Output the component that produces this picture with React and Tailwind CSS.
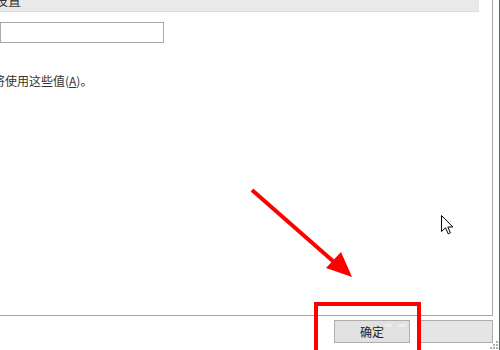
import React from 'react';

const font = { fontFamily: '"Noto Sans CJK SC", "Noto Sans", sans-serif' };

const gripDots = [0, 0, 1, 0, 1, 1, 1, 1, 1];

const App = () => {
    return (
        <div className="relative w-[500px] h-[350px] overflow-hidden bg-white flex" style={font}>
            {/* Dialog area */}
            <div className="w-[499px] flex flex-col">
                {/* Settings panel */}
                <div className="w-[493px] h-[316px] border-r border-b border-[#a6a6a6] flex flex-col">
                    <div className="h-[12px] w-[479px] bg-[#e9e9e9] border-b border-[#dcdcdc] overflow-hidden">
                        <div className="-mt-[9px] -ml-[5px] text-[13px] leading-[17px] text-[#333]">设置</div>
                    </div>
                    <div className="mt-[10px] w-[164px] h-[21px] border border-[#a9a9a9] bg-white" />
                    <div className="mt-[30px] -ml-[7px] text-[12px] leading-[16px] text-[#333]">
                        将使用这些值(<span className="underline">A</span>)。
                    </div>
                </div>

                {/* Footer buttons */}
                <div className="flex justify-end gap-[7px] pt-[4px] pr-[6px]">
                    <div className="relative w-[76px] h-[23px] bg-[#e1e1e1] border border-[#adadad] flex items-center justify-center text-[12px] text-[#222]">
                        确定
                        <div className="absolute left-[50px] top-[3px] w-[7px] h-[3px] bg-[#ececec]" />
                        <div className="absolute left-[63px] top-[3px] w-[8px] h-[3px] bg-[#ececec]" />
                    </div>
                    <div className="w-[76px] h-[23px] bg-[#e5e5e5] border border-[#adadad]" />
                </div>
            </div>

            {/* Window edge */}
            <div className="w-[1px] h-full bg-[#5f6368]" />

            {/* Resize grip */}
            <div className="absolute right-[2px] bottom-[1px] grid grid-cols-3 gap-[1px]">
                {gripDots.map((on, i) => (
                    <div key={i} className={on ? 'w-[2px] h-[2px] bg-[#b0b0b0]' : 'w-[2px] h-[2px]'} />
                ))}
            </div>

            {/* Red highlight box */}
            <div className="absolute left-[314px] top-[302px] w-[107px] h-[52px] border-[4px] border-[#ff0000]" />

            {/* Red arrow */}
            <svg className="absolute left-0 top-0" width="500" height="350" viewBox="0 0 500 350">
                <line x1="252" y1="190" x2="334" y2="262" stroke="#ff0000" strokeWidth="4" />
                <polygon points="352,277 326,268 341,252" fill="#ff0000" />
            </svg>

            {/* Mouse cursor */}
            <svg className="absolute left-[441px] top-[215px]" width="13" height="20" viewBox="0 0 13 20">
                <path d="M0.5 0.5 L0.5 16.5 L4.5 12.8 L7.2 18.8 L9.4 17.8 L6.8 12 L11.8 12 Z" fill="#fff" stroke="#000" strokeWidth="1" strokeLinejoin="miter" />
            </svg>
        </div>
    );
};

export default App;
